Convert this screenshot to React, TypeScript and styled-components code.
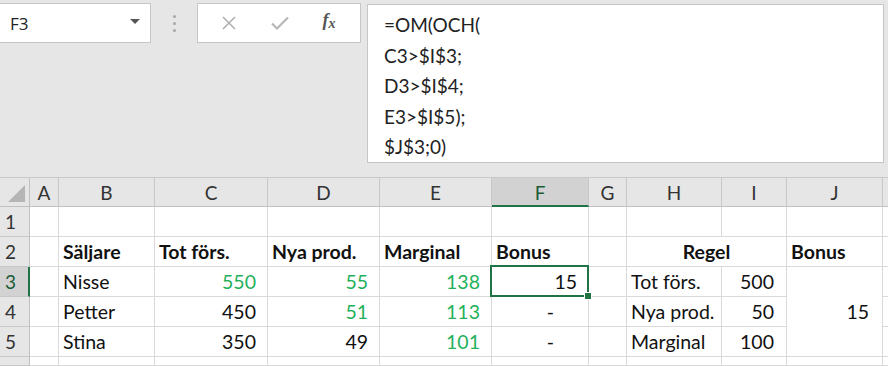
import React from "react";
import styled, { createGlobalStyle } from "styled-components";

const Global = createGlobalStyle`
  html, body { margin: 0; padding: 0; background: #e6e6e6; }
  body { width: 888px; height: 366px; overflow: hidden; font-family: Lato, "Open Sans", sans-serif; }
  * { box-sizing: border-box; }
`;

const Page = styled.div`
  width: 888px;
  height: 366px;
  display: flex;
  flex-direction: column;
  background: #e6e6e6;
  overflow: hidden;
`;

const Toolbar = styled.div`
  height: 177px;
  flex: none;
  display: flex;
  align-items: flex-start;
  padding-top: 3px;
`;

const NameBox = styled.div`
  width: 152px;
  height: 40px;
  margin-left: -1px;
  background: #fff;
  border: 1px solid #c6c6c6;
  display: flex;
  align-items: center;
  justify-content: space-between;
  padding: 0 10px 0 10px;
  font-family: "Open Sans", "Noto Sans", sans-serif;
  font-size: 17px;
  color: #222;
`;

const DropArrow = styled.span`
  width: 0;
  height: 0;
  border-left: 5px solid transparent;
  border-right: 5px solid transparent;
  border-top: 5px solid #555;
  margin-top: -4px;
`;

const Dots = styled.div`
  width: 46px;
  height: 40px;
  display: flex;
  flex-direction: column;
  align-items: center;
  justify-content: center;
  gap: 4px;
`;

const Dot = styled.span`
  width: 3px;
  height: 3px;
  border-radius: 50%;
  background: #a8a8a8;
`;

const FxBox = styled.div`
  width: 164px;
  height: 40px;
  background: #fff;
  border: 1px solid #c6c6c6;
  display: flex;
  align-items: center;
  justify-content: space-around;
  padding: 0 8px 0 6px;
`;

const FxLabel = styled.span`
  font-family: "Liberation Serif", serif;
  font-style: italic;
  font-weight: bold;
  font-size: 18px;
  color: #555;
  margin-top: -4px;
`;

const FxSub = styled.span`
  font-size: 14px;
  vertical-align: -2px;
`;

const FormulaBox = styled.div`
  width: 517px;
  height: 159px;
  margin-left: 6px;
  margin-top: 1px;
  background: #fff;
  border: 1px solid #c6c6c6;
  padding: 5px 0 0 16px;
  font-family: Lato, sans-serif;
  font-size: 19px;
  line-height: 30.5px;
  color: #222;
`;

const FLine = styled.div`
  white-space: pre;
`;

const Sheet = styled.div`
  display: grid;
  grid-template-columns: 30px 29px 96px 113px 112px 112px 97px 38px 95px 65px 96px 1fr;
  grid-template-rows: 29px repeat(5, 30px) 1fr;
  border-top: 1px solid #c8c8c8;
  background: #fff;
  flex: 1;
  font-family: Lato, sans-serif;
  font-size: 19.5px;
  color: #111;
`;

const ColHead = styled.div<{ $active?: boolean }>`
  background: ${(p) => (p.$active ? "#d2d2d2" : "#e6e6e6")};
  border-right: 1px solid #c8c8c8;
  border-bottom: ${(p) => (p.$active ? "2px solid #217346" : "1px solid #c0c0c0")};
  display: flex;
  align-items: center;
  justify-content: center;
  font-size: 19px;
  color: ${(p) => (p.$active ? "#1e5c38" : "#333")};
  padding-top: ${(p) => (p.$active ? "1px" : "0")};
`;

const Corner = styled.div`
  background: #e6e6e6;
  border-right: 1px solid #c0c0c0;
  border-bottom: 1px solid #c0c0c0;
  display: flex;
  align-items: flex-end;
  justify-content: flex-end;
  padding: 0 4px 4px 0;
`;

const CornerTri = styled.span`
  width: 0;
  height: 0;
  border-left: 17px solid transparent;
  border-bottom: 17px solid #b5b5b5;
`;

const RowHead = styled.div<{ $active?: boolean }>`
  background: ${(p) => (p.$active ? "#d2d2d2" : "#e6e6e6")};
  border-right: ${(p) => (p.$active ? "2px solid #217346" : "1px solid #c0c0c0")};
  border-bottom: 1px solid #c8c8c8;
  display: flex;
  align-items: center;
  padding-left: 5px;
  font-size: 19px;
  color: ${(p) => (p.$active ? "#1e5c38" : "#333")};
`;

const Cell = styled.div<{
  $align?: "left" | "right" | "center";
  $bold?: boolean;
  $green?: boolean;
  $span?: number;
  $rowSpan?: number;
  $pr?: number;
}>`
  position: relative;
  border-right: 1px solid #dadada;
  border-bottom: 1px solid #dadada;
  display: flex;
  align-items: center;
  justify-content: ${(p) =>
    p.$align === "right" ? "flex-end" : p.$align === "center" ? "center" : "flex-start"};
  padding: 0 ${(p) => (p.$pr ?? 11)}px 0 4px;
  font-weight: ${(p) => (p.$bold ? 700 : 400)};
  color: ${(p) => (p.$green ? "#1fb15a" : "#111")};
  white-space: nowrap;
  ${(p) => (p.$span ? `grid-column: span ${p.$span};` : "")}
  ${(p) => (p.$rowSpan ? `grid-row: span ${p.$rowSpan};` : "")}
`;

const Selection = styled.div`
  position: absolute;
  z-index: 2;
  left: -2px;
  top: -2px;
  right: -1px;
  bottom: -1px;
  border: 2px solid #217346;
  pointer-events: none;
`;

const Handle = styled.div`
  position: absolute;
  right: -5px;
  bottom: -5px;
  width: 8px;
  height: 8px;
  background: #217346;
  border: 1px solid #fff;
`;

type C = {
  t?: string;
  a?: "left" | "right" | "center";
  b?: boolean;
  g?: boolean;
  span?: number;
  rowSpan?: number;
  pr?: number;
  sel?: boolean;
};

const cols = ["A", "B", "C", "D", "E", "F", "G", "H", "I", "J", ""];

const blank: C[] = [{}, {}, {}, {}, {}, {}, {}, {}, {}, {}, {}];

const rows: { n: number; label: string; cells: C[] }[] = [
  { n: 1, label: "1", cells: blank },
  {
    n: 2,
    label: "2",
    cells: [
      {},
      { t: "Säljare", b: true },
      { t: "Tot förs.", b: true },
      { t: "Nya prod.", b: true },
      { t: "Marginal", b: true },
      { t: "Bonus", b: true },
      {},
      { t: "Regel", b: true, a: "center", span: 2, pr: 4 },
      { t: "Bonus", b: true },
      {},
    ],
  },
  {
    n: 3,
    label: "3",
    cells: [
      {},
      { t: "Nisse" },
      { t: "550", a: "right", g: true },
      { t: "55", a: "right", g: true },
      { t: "138", a: "right", g: true },
      { t: "15", a: "right", sel: true },
      {},
      { t: "Tot förs." },
      { t: "500", a: "right", pr: 12 },
      { t: "15", a: "right", rowSpan: 3, pr: 13 },
      {},
    ],
  },
  {
    n: 4,
    label: "4",
    cells: [
      {},
      { t: "Petter" },
      { t: "450", a: "right" },
      { t: "51", a: "right", g: true },
      { t: "113", a: "right", g: true },
      { t: "-", a: "right", pr: 34 },
      {},
      { t: "Nya prod." },
      { t: "50", a: "right", pr: 12 },
      {},
    ],
  },
  {
    n: 5,
    label: "5",
    cells: [
      {},
      { t: "Stina" },
      { t: "350", a: "right" },
      { t: "49", a: "right" },
      { t: "101", a: "right", g: true },
      { t: "-", a: "right", pr: 34 },
      {},
      { t: "Marginal" },
      { t: "100", a: "right", pr: 12 },
      {},
    ],
  },
  { n: 6, label: "", cells: blank },
];

export default function App() {
  return (
    <Page>
      <Global />
      <Toolbar>
        <NameBox>
          <span>F3</span>
          <DropArrow />
        </NameBox>
        <Dots>
          <Dot />
          <Dot />
          <Dot />
        </Dots>
        <FxBox>
          <svg width="16" height="16" viewBox="0 0 16 16">
            <path d="M2 2 L14 14 M14 2 L2 14" stroke="#b0b0b0" strokeWidth="1.6" fill="none" />
          </svg>
          <svg width="20" height="16" viewBox="0 0 20 16">
            <path d="M2 8.5 L7 13.5 L18 2.5" stroke="#b8b8b8" strokeWidth="2.2" fill="none" />
          </svg>
          <FxLabel>
            f<FxSub>x</FxSub>
          </FxLabel>
        </FxBox>
        <FormulaBox>
          <FLine>=OM(OCH(</FLine>
          <FLine>C3&gt;$I$3;</FLine>
          <FLine>D3&gt;$I$4;</FLine>
          <FLine>E3&gt;$I$5);</FLine>
          <FLine>$J$3;0)</FLine>
        </FormulaBox>
      </Toolbar>
      <Sheet>
        <Corner>
          <CornerTri />
        </Corner>
        {cols.map((c, i) => (
          <ColHead key={i} $active={c === "F"}>
            {c}
          </ColHead>
        ))}
        {rows.map((r) => (
          <React.Fragment key={r.n}>
            <RowHead $active={r.n === 3}>{r.label}</RowHead>
            {r.cells.map((c, i) => (
              <Cell
                key={i}
                $align={c.a}
                $bold={c.b}
                $green={c.g}
                $span={c.span}
                $rowSpan={c.rowSpan}
                $pr={c.pr}
              >
                {c.t}
                {c.sel && (
                  <Selection>
                    <Handle />
                  </Selection>
                )}
              </Cell>
            ))}
          </React.Fragment>
        ))}
      </Sheet>
    </Page>
  );
}
